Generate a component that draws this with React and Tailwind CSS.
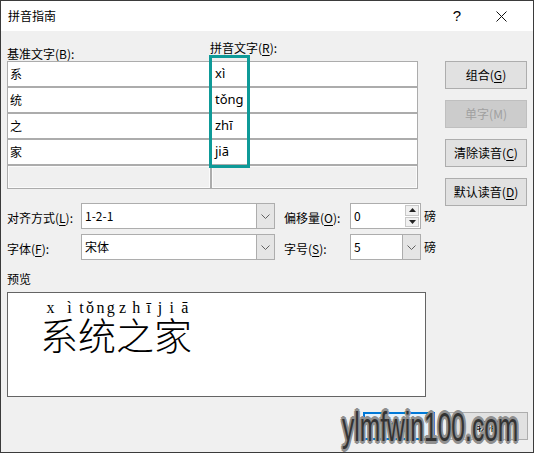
import React from 'react';

const cjk = { fontFamily: '"Noto Sans CJK SC", "Noto Sans", sans-serif' };

const Label = ({ text, keyChar }) => (
  <span className="text-[12px] leading-[16px] text-black whitespace-nowrap">
    {text}(<span className="underline underline-offset-2">{keyChar}</span>):
  </span>
);

const Chevron = () => (
  <svg width="9" height="5" viewBox="0 0 9 5" className="block">
    <polyline points="0.5,0.5 4.5,4.5 8.5,0.5" fill="none" stroke="#606060" strokeWidth="1" />
  </svg>
);

const Select = ({ value, width }) => (
  <div className={`flex h-full border border-[#adadad] bg-white ${width}`}>
    <div className="flex-1 flex items-center pl-[3px] text-[12px]">{value}</div>
    <div className="w-[18px] flex items-center justify-center bg-[#e5e5e5] border-l border-[#adadad]">
      <Chevron />
    </div>
  </div>
);

const Button = ({ text, keyChar, disabled }) => (
  <div
    className={`h-[28px] flex items-center justify-center border text-[12px] ${
      disabled ? 'bg-[#cccccc] border-[#bfbfbf] text-[#a0a0a0]' : 'bg-[#e1e1e1] border-[#adadad] text-black'
    }`}
  >
    {text}(<span className={disabled ? '' : 'underline underline-offset-2'}>{keyChar}</span>)
  </div>
);

const rows = [
  ['系', 'xì'],
  ['统', 'tǒng'],
  ['之', 'zhī'],
  ['家', 'jiā'],
];

const preview = [
  ['系', ['x', 'ì']],
  ['统', ['t', 'ǒ', 'n', 'g']],
  ['之', ['z', 'h', 'ī']],
  ['家', ['j', 'i', 'ā']],
];

export default function App() {
  return (
    <div className="relative w-[534px] h-[453px] border border-[#3b3b3b] bg-[#f0f0f0] flex flex-col overflow-hidden" style={cjk}>
      {/* title bar */}
      <div className="h-[30px] bg-white flex items-center pl-[7px] pr-[10px] shrink-0">
        <span className="text-[12px]">拼音指南</span>
        <div className="ml-auto flex">
          <div className="w-[44px] flex items-center justify-center text-[15px] text-black" style={{ fontFamily: '"Liberation Sans", sans-serif' }}>?</div>
          <div className="w-[44px] flex items-center justify-center">
            <svg width="11" height="11" viewBox="0 0 11 11">
              <path d="M0.5 0.5 L10.5 10.5 M10.5 0.5 L0.5 10.5" stroke="#111" strokeWidth="1" />
            </svg>
          </div>
        </div>
      </div>

      <div className="pl-[6px] pr-[5px] flex flex-col">
        {/* top section */}
        <div className="flex items-start h-[160px]">
          <div className="w-[411px] flex flex-col">
            <div className="flex mt-[9px] mb-[5px] h-[16px]">
              <div className="w-[203px]"><Label text="基准文字" keyChar="B" /></div>
              <Label text="拼音文字" keyChar="R" />
            </div>
            <div className="relative grid grid-cols-[202px_205px] gap-[2px] p-[1px] bg-[#acacac]">
              {rows.map(([c, p]) => (
                <React.Fragment key={c}>
                  <div className="h-[24px] bg-white flex items-center pl-[2px] text-[12px]">{c}</div>
                  <div className="h-[24px] bg-white flex items-center pl-[3px] text-[13px]" style={{ fontFamily: '"Noto Sans", sans-serif' }}>{p}</div>
                </React.Fragment>
              ))}
              <div className="h-[22px] bg-[#f0f0f0] border border-[#fbfbfb]" />
              <div className="h-[22px] bg-[#f0f0f0] border border-[#fbfbfb]" />
              {/* highlight annotation */}
              <div className="absolute left-[202px] top-[-6px] w-[41px] h-[113px] border-[3px] border-[#0e9a98]" />
            </div>
          </div>
          <div className="ml-[27px] w-[82px] flex flex-col gap-[11px] pt-[30px]">
            <Button text="组合" keyChar="G" />
            <Button text="单字" keyChar="M" disabled />
            <Button text="清除读音" keyChar="C" />
            <Button text="默认读音" keyChar="D" />
          </div>
        </div>

        {/* options */}
        <div className="mt-[12px] flex flex-col gap-[5px]">
          <div className="h-[26px] flex items-center">
            <div className="w-[74px]"><Label text="对齐方式" keyChar="L" /></div>
            <Select value="1-2-1" width="w-[194px]" />
            <div className="w-[66px] ml-[9px]"><Label text="偏移量" keyChar="O" /></div>
            <div className="w-[71px] h-full flex border border-[#adadad] bg-white">
              <div className="flex-1 flex items-center pl-[3px] text-[12px]">0</div>
              <div className="w-[16px] flex flex-col gap-[1px] p-[1px]">
                <div className="flex-1 flex items-center justify-center bg-[#f0f0f0] border border-[#c8c8c8]">
                  <svg width="7" height="4" viewBox="0 0 7 4"><polygon points="3.5,0 7,4 0,4" fill="#222" /></svg>
                </div>
                <div className="flex-1 flex items-center justify-center bg-[#f0f0f0] border border-[#c8c8c8]">
                  <svg width="7" height="4" viewBox="0 0 7 4"><polygon points="0,0 7,0 3.5,4" fill="#222" /></svg>
                </div>
              </div>
            </div>
            <span className="ml-[3px] text-[12px]">磅</span>
          </div>
          <div className="h-[26px] flex items-center">
            <div className="w-[74px]"><Label text="字体" keyChar="F" /></div>
            <Select value="宋体" width="w-[194px]" />
            <div className="w-[66px] ml-[9px]"><Label text="字号" keyChar="S" /></div>
            <Select value="5" width="w-[71px]" />
            <span className="ml-[3px] text-[12px]">磅</span>
          </div>
        </div>

        {/* preview */}
        <div className="mt-[11px] h-[16px] text-[12px] leading-[16px]">预览</div>
        <div className="mt-[5px] w-[419px] h-[105px] bg-white border border-[#646464] pl-[32px] pt-[7px]">
          <div className="flex">
            {preview.map(([c, letters]) => (
              <div key={c} className="w-[38px] flex flex-col">
                <div className="flex justify-around text-[16px] leading-[16px] text-black" style={{ fontFamily: '"Liberation Serif", serif' }}>
                  {letters.map((l, i) => <span key={i}>{l}</span>)}
                </div>
                <div className="text-[38px] leading-[40px] font-light text-black -mt-[2px]">{c}</div>
              </div>
            ))}
          </div>
        </div>

        {/* dialog buttons */}
        <div className="mt-[15px] flex justify-end gap-[11px]">
          <div className="w-[72px] h-[28px] border-2 border-[#0078d7] bg-[#e5f1fb] flex items-center justify-center text-[12px]">确定</div>
          <div className="w-[82px] h-[28px] border border-[#adadad] bg-[#e1e1e1] flex items-center justify-center text-[12px]">取消</div>
        </div>
      </div>

      {/* watermark */}
      <div
        className="absolute left-[341px] top-[402px] w-[290px] text-[41px] leading-[48px] text-[#333] font-medium origin-left scale-x-[0.6] [text-shadow:2px_2px_0_#8f8f8f,-2px_-2px_0_#8f8f8f,2px_-2px_0_#8f8f8f,-2px_2px_0_#8f8f8f,0_3px_0_#8f8f8f,3px_0_0_#8f8f8f,0_-3px_0_#8f8f8f,-3px_0_0_#8f8f8f]"
        style={{ fontFamily: '"Liberation Sans", sans-serif' }}
      >
        ylmfwin100.com
      </div>
    </div>
  );
}
